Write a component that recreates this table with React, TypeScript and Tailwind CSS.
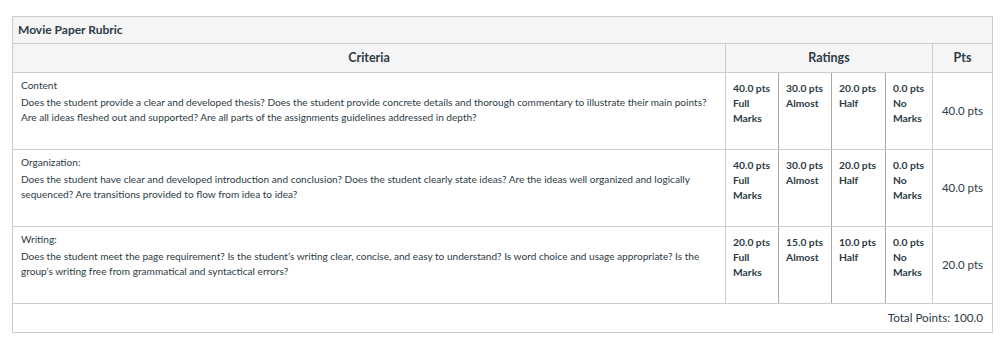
const rows = [
  {
    title: "Content",
    desc: "Does the student provide a clear and developed thesis? Does the student provide concrete details and thorough commentary to illustrate their main points? Are all ideas fleshed out and supported? Are all parts of the assignments guidelines addressed in depth?",
    ratings: [
      { pts: "40.0 pts", label: "Full Marks" },
      { pts: "30.0 pts", label: "Almost" },
      { pts: "20.0 pts", label: "Half" },
      { pts: "0.0 pts", label: "No Marks" },
    ],
    total: "40.0 pts",
  },
  {
    title: "Organization:",
    desc: "Does the student have clear and developed introduction and conclusion? Does the student clearly state ideas? Are the ideas well organized and logically sequenced? Are transitions provided to flow from idea to idea?",
    ratings: [
      { pts: "40.0 pts", label: "Full Marks" },
      { pts: "30.0 pts", label: "Almost" },
      { pts: "20.0 pts", label: "Half" },
      { pts: "0.0 pts", label: "No Marks" },
    ],
    total: "40.0 pts",
  },
  {
    title: "Writing:",
    desc: "Does the student meet the page requirement? Is the student’s writing clear, concise, and easy to understand? Is word choice and usage appropriate? Is the group’s writing free from grammatical and syntactical errors?",
    ratings: [
      { pts: "20.0 pts", label: "Full Marks" },
      { pts: "15.0 pts", label: "Almost" },
      { pts: "10.0 pts", label: "Half" },
      { pts: "0.0 pts", label: "No Marks" },
    ],
    total: "20.0 pts",
  },
];

export default function App() {
  return (
    <div className="bg-white w-[1007px] h-[344px] pt-4 pl-3 text-[#2d3b45] font-['Lato','Liberation_Sans',sans-serif]">
      <table className="table-fixed border-collapse w-[981px]">
        <colgroup>
          <col className="w-[713px]" />
          <col className="w-[53px]" />
          <col className="w-[53px]" />
          <col className="w-[54px]" />
          <col className="w-[47px]" />
          <col className="w-[60px]" />
        </colgroup>
        <thead>
          <tr>
            <th colSpan={6} className="h-[27px] border border-[#c7cdd1] bg-[#f5f5f5] px-[5px] text-left text-[12px] font-bold">
              Movie Paper Rubric
            </th>
          </tr>
          <tr>
            <th className="h-[29px] border border-[#c7cdd1] bg-[#f5f5f5] text-center text-[12.5px] font-bold">Criteria</th>
            <th colSpan={4} className="border border-[#c7cdd1] bg-[#f5f5f5] text-center text-[12.5px] font-bold">Ratings</th>
            <th className="border border-[#c7cdd1] bg-[#f5f5f5] text-center text-[12.5px] font-bold">Pts</th>
          </tr>
        </thead>
        <tbody>
          {rows.map((row) => (
            <tr key={row.title} className="h-[77px]">
              <td className="border border-[#c7cdd1] px-2 pt-[5px] align-top text-[10.1px] leading-[15.5px]">
                <div className="mb-[1px]">{row.title}</div>
                <div>{row.desc}</div>
              </td>
              {row.ratings.map((r, i) => (
                <td
                  key={r.pts + i}
                  className={
                    i < 3
                      ? "border border-[#c7cdd1] border-r-[#a8a8a8] px-[7px] pt-2 align-top text-[10.3px] font-bold leading-[15px]"
                      : "border border-[#c7cdd1] px-[7px] pt-2 align-top text-[10.3px] font-bold leading-[15px]"
                  }
                >
                  <div>{r.pts}</div>
                  <div>{r.label}</div>
                </td>
              ))}
              <td className="border border-[#c7cdd1] text-center align-middle text-[11.5px]">{row.total}</td>
            </tr>
          ))}
          <tr>
            <td colSpan={6} className="h-[29px] border border-[#c7cdd1] pr-[9px] text-right text-[11.7px]">
              Total Points: 100.0
            </td>
          </tr>
        </tbody>
      </table>
    </div>
  );
}
